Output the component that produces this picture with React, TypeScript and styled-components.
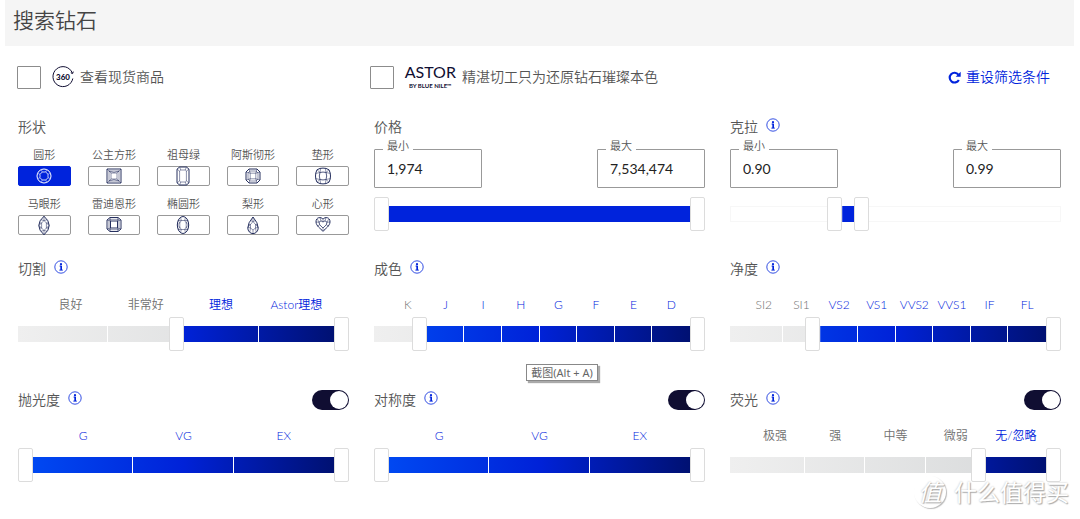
import React, { useId, useState } from "react";
import styled, { createGlobalStyle, css } from "styled-components";

const GlobalStyle = createGlobalStyle`
  *, *::before, *::after { box-sizing: border-box; }
  body {
    margin: 0;
    background: #fff;
    color: #555;
    font-family: Lato, "Noto Sans CJK SC", sans-serif;
    font-size: 14px;
    font-weight: 350;
    line-height: 20px;
  }
  button, input { font: inherit; color: inherit; margin: 0; padding: 0; }
`;

const blue = "#0023dc";
const navy = "#100e32";
const thumb = 15;

const Page = styled.div`
  position: relative;
  padding-bottom: 20px;
`;

const Header = styled.header`
  margin: 0 6px 0 5px;
  padding: 4px 8px 10px;
  background: #f5f5f5;
`;

const Heading = styled.h1`
  margin: 0;
  color: #444;
  font-size: 21px;
  font-weight: 350;
  line-height: 32px;
`;

const Options = styled.div`
  display: grid;
  grid-template-columns: repeat(3, 1fr);
  gap: 25px;
  align-items: center;
  margin: 18px 30px 27px 17px;
  height: 26px;
`;

const Option = styled.label`
  display: flex;
  align-items: center;
  white-space: nowrap;
`;

const Tick = styled.input`
  appearance: none;
  flex: none;
  width: 24px;
  height: 23px;
  margin-right: 11px;
  border: 1px solid #8c8c8c;
  border-radius: 1px;
  background: #fff;
  &:checked { background: ${blue}; }
`;

const Spin = styled.svg`
  width: 22px;
  height: 22px;
  margin-right: 6px;
`;

const Astor = styled.span`
  display: flex;
  flex-direction: column;
  align-items: center;
  gap: 3px;
  margin-right: 6px;
  color: ${navy};
  font-size: 16px;
  font-weight: 400;
  line-height: 15px;
`;

const AstorNote = styled.small`
  font-size: 6px;
  font-weight: 700;
  line-height: 8px;
`;

const Reset = styled.button`
  display: flex;
  align-items: center;
  justify-self: end;
  gap: 5px;
  border: 0;
  background: none;
  color: ${blue};
  white-space: nowrap;
`;

const Filters = styled.main`
  display: grid;
  grid-template-columns: repeat(3, 1fr);
  gap: 24px 25px;
  margin: 0 19px 0 18px;
`;

const Panel = styled.section`
  position: relative;
  min-width: 0;
`;

const GradePanel = styled(Panel)`
  padding-bottom: 15px;
`;

const TitleBar = styled.div`
  display: flex;
  align-items: center;
  height: 20px;
`;

const Title = styled.h2`
  margin: 0;
  font-size: 14px;
  font-weight: 350;
`;

const InfoButton = styled.button`
  display: flex;
  margin: 0 auto 4px 8px;
  border: 0;
  background: none;
  color: ${blue};
`;

const Switch = styled.input`
  appearance: none;
  width: 37px;
  height: 20px;
  margin-left: auto;
  padding: 1px;
  border-radius: 10px;
  background: #aaa;
  &::before {
    content: "";
    display: block;
    width: 18px;
    height: 18px;
    border-radius: 50%;
    background: #fff;
  }
  &:checked { background: ${navy}; }
  &:checked::before { margin-left: auto; }
`;

const ShapeGrid = styled.div`
  display: grid;
  grid-template-columns: repeat(5, 1fr);
  gap: 10px 17px;
  margin-top: 10px;
`;

const ShapeName = styled.span`
  font-size: 11px;
  line-height: 16px;
  white-space: nowrap;
`;

const ShapeFrame = styled.span<{ $on: boolean }>`
  display: flex;
  align-items: center;
  justify-content: center;
  align-self: stretch;
  height: 20px;
  border: 1px solid ${(p) => (p.$on ? blue : "#999")};
  border-radius: 2px;
  background: ${(p) => (p.$on ? blue : "#fff")};
  color: ${(p) => (p.$on ? "#fff" : "#26305f")};
`;

const ShapeButton = styled.button`
  display: flex;
  flex-direction: column;
  align-items: center;
  gap: 3px;
  border: 0;
  background: none;
`;

const Gem = styled.svg`
  flex: none;
  width: 20px;
  height: 20px;
  fill: none;
  stroke: currentColor;
  stroke-width: 1;
`;

const Facets = styled.path`
  stroke-width: 0.7;
  opacity: 0.75;
`;

const Fields = styled.div`
  display: flex;
  justify-content: space-between;
  margin: 12px 0 9px;
`;

const Field = styled.label`
  position: relative;
  width: 108px;
`;

const FieldName = styled.span`
  position: absolute;
  top: -13px;
  left: 9px;
  padding: 0 4px;
  background: #fff;
  font-size: 11px;
`;

const FieldInput = styled.input`
  display: block;
  width: 100%;
  height: 39px;
  padding: 0 12px;
  border: 1px solid #999;
  border-radius: 1px;
  background: #fff;
  color: #222;
  font-weight: 400;
`;

const Grades = styled.div`
  display: grid;
  grid-auto-flow: column;
  grid-auto-columns: 1fr;
  margin: 18px ${thumb}px 4px;
`;

const Grade = styled.span<{ $on: boolean }>`
  display: flex;
  justify-content: center;
  color: ${(p) => (p.$on ? blue : "#707070")};
  font-size: 12px;
  line-height: 16px;
  white-space: nowrap;
`;

const Slider = styled.div`
  display: grid;
  align-items: center;
  height: 34px;
  & > * { grid-area: 1 / 1; }
`;

const Rail = styled.div<{ $plain: boolean }>`
  height: 16px;
  ${(p) =>
    p.$plain
      ? css`border: 1px solid #f7f7f7;`
      : css`background: linear-gradient(90deg, #efefef, #d6d8d9);`}
`;

const Fill = styled.div<{ $plain: boolean }>`
  height: 16px;
  clip-path: inset(
    0 calc((100% - ${thumb * 2}px) * (1 - var(--high)) + ${thumb}px) 0
    calc((100% - ${thumb * 2}px) * var(--low) + ${thumb}px)
  );
  background: ${(p) => (p.$plain ? blue : "linear-gradient(90deg, #004cf4, #0022d8 50%, #000f68)")};
`;

const Marks = styled.div`
  display: grid;
  grid-auto-flow: column;
  grid-auto-columns: 1fr;
  z-index: 1;
  height: 16px;
  margin: 0 ${thumb}px;
`;

const Mark = styled.i`
  border-right: 1px solid #fff;
  &:last-child { border: 0; }
`;

const knob = css`
  appearance: none;
  width: ${thumb}px;
  height: 34px;
  border: 1px solid #dcdcdc;
  border-radius: 2px;
  background: #fff;
  pointer-events: auto;
`;

const Range = styled.input<{ $end: "low" | "high" }>`
  appearance: none;
  z-index: 2;
  min-width: 0;
  height: 34px;
  margin: ${(p) => (p.$end === "low" ? `0 ${thumb}px 0 0` : `0 0 0 ${thumb}px`)};
  background: transparent;
  pointer-events: none;
  &::-webkit-slider-thumb { ${knob} }
  &::-moz-range-thumb { ${knob} }
`;

const Hint = styled.div`
  position: absolute;
  top: 105px;
  left: 46%;
  padding: 0 4px;
  border: 1px solid #888;
  background: #fff;
  box-shadow: 2px 2px 1px #aaa;
  color: #666;
  font-family: "Noto Sans", "Noto Sans CJK SC", sans-serif;
  font-size: 11px;
  font-weight: 400;
  line-height: 15px;
  white-space: nowrap;
`;

const Watermark = styled.div`
  position: absolute;
  right: 11px;
  bottom: 9px;
  display: flex;
  align-items: center;
  gap: 8px;
  color: #fff;
  font-size: 23px;
  font-weight: 400;
  line-height: 32px;
  text-shadow: 1px 1px 1px #aaa, 0 0 2px #bbb;
  pointer-events: none;
`;

const Seal = styled.span`
  display: flex;
  justify-content: center;
  width: 32px;
  height: 32px;
  border-radius: 50%;
  background: #fff;
  box-shadow: 1px 1px 1px #bbb;
  font-style: italic;
`;

const InfoIcon = () => (
  <svg width="14" height="14" viewBox="0 0 14 14" fill="none" stroke="currentColor" aria-hidden="true">
    <circle cx="7" cy="7" r="6.2" strokeWidth="0.8" />
    <circle cx="7" cy="4.2" r="1.1" fill="currentColor" stroke="none" />
    <path d="M5.6 6.1H7.3V10M5.4 10.1H8.8" strokeWidth="1" />
    <path d="M7.2 5.8V10" strokeWidth="1.6" />
  </svg>
);

const gems: Record<string, React.ReactNode> = {
  round: (
    <>
      <circle cx="10" cy="10" r="7" />
      <path d="M8.3 6H11.7L14 8.3V11.7L11.7 14H8.3L6 11.7V8.3Z" strokeWidth="0.8" />
      <Facets d="M8.3 6L7.2 3.6M11.7 6L12.8 3.6M14 8.3L16.4 7.2M14 11.7L16.4 12.8M11.7 14L12.8 16.4M8.3 14L7.2 16.4M6 11.7L3.6 12.8M6 8.3L3.6 7.2" />
    </>
  ),
  princess: (
    <>
      <path d="M3 3H17V17H3Z" />
      <Facets d="M5 5H15V15H5ZM7 7H13V13H7ZM3 3L7 7M17 3L13 7M17 17L13 13M3 17L7 13M5 5L10 6.5L15 5M5 15L10 13.5L15 15" />
    </>
  ),
  emerald: (
    <>
      <path d="M6.5 1H13.5L16 3.2V16.8L13.5 19H6.5L4 16.8V3.2Z" />
      <Facets d="M7.8 4H12.2L13.4 5V15L12.2 16H7.8L6.6 15V5ZM6.5 1L7.8 4M13.5 1L12.2 4M16 3.2L13.4 5M16 16.8L13.4 15M13.5 19L12.2 16M6.5 19L7.8 16M4 16.8L6.6 15M4 3.2L6.6 5" />
    </>
  ),
  asscher: (
    <>
      <path d="M6 3H14L17 6V14L14 17H6L3 14V6Z" />
      <Facets d="M7 5H13L15 7V13L13 15H7L5 13V7ZM7.2 7.2H12.8V12.8H7.2ZM6 3L7.2 7.2M14 3L12.8 7.2M17 6L12.8 7.2M17 14L12.8 12.8M14 17L12.8 12.8M6 17L7.2 12.8M3 14L7.2 12.8M3 6L7.2 7.2" />
    </>
  ),
  cushion: (
    <>
      <path d="M7 2.4Q10 1.8 13 2.4Q17 3 17.2 7Q17.8 10 17.2 13Q17 17 13 17.6Q10 18.2 7 17.6Q3 17 2.8 13Q2.2 10 2.8 7Q3 3 7 2.4Z" />
      <path d="M7 6.5Q10 5.6 13 6.5Q14.4 10 13 13.5Q10 14.4 7 13.5Q5.6 10 7 6.5Z" strokeWidth="0.8" />
      <Facets d="M7 6.5L4.2 4M7 6.5L7.6 2.4M13 6.5L12.4 2.4M13 6.5L15.8 4M13 6.5L17.2 7.4M13 13.5L17.2 12.6M13 13.5L15.8 16M13 13.5L12.4 17.6M7 13.5L7.6 17.6M7 13.5L4.2 16M7 13.5L2.8 12.6M7 6.5L2.8 7.4" />
    </>
  ),
  marquise: (
    <>
      <path d="M10 1.2Q15.2 5.7 15.2 10.5T10 19.8Q4.8 15.3 4.8 10.5T10 1.2Z" />
      <Facets d="M10 5.5L12.4 8V13L10 15.5L7.6 13V8ZM10 1.2V5.5M10 15.5V19.8M13.2 4.8L10 5.5L6.8 4.8M12.4 8L14.8 8M12.4 8L15.2 10.5L12.4 13L14.8 13M7.6 8L5.2 8M7.6 8L4.8 10.5L7.6 13L5.2 13M13.2 16.2L10 15.5L6.8 16.2" />
    </>
  ),
  radiant: (
    <>
      <path d="M6 2.5H14L17 5V14L14 16.5H6L3 14V5Z" />
      <path d="M6.5 6H13.5V13H6.5Z" />
      <Facets d="M5 4.3H15V14.7H5ZM6 2.5L6.5 6M14 2.5L13.5 6M17 5L13.5 6M17 14L13.5 13M14 16.5L13.5 13M6 16.5L6.5 13M3 14L6.5 13M3 5L6.5 6" />
    </>
  ),
  oval: (
    <>
      <ellipse cx="10" cy="10" rx="5.7" ry="8.5" />
      <Facets d="M8.3 5.5H11.7L13.2 8V12L11.7 14.5H8.3L6.8 12V8ZM8.3 5.5L7.5 2.4M11.7 5.5L12.5 2.4M11.7 5.5H14.8L13.2 8L15.7 10L13.2 12L14.8 14.5H11.7L12.5 17.6M8.3 14.5L7.5 17.6M8.3 14.5H5.2L6.8 12L4.3 10L6.8 8L5.2 5.5H8.3" />
    </>
  ),
  pear: (
    <>
      <path d="M10 2Q15.2 8 15.2 12.9A5.2 5.7 0 0 1 4.8 12.9Q4.8 8 10 2Z" />
      <Facets d="M10 6.5L12.5 9.5V13L10 15L7.5 13V9.5ZM10 2V6.5M12.5 5.5L10 6.5L7.5 5.5M14.5 9.5H12.5L15.2 12.3L12.5 13L13.2 17M5.5 9.5H7.5L4.8 12.3L7.5 13L6.8 17M10 15V18.5" />
    </>
  ),
  heart: (
    <>
      <path d="M10 4.2C12 1.5 17.2 2 17 7C16.8 11 12.5 13.5 10 16.3C7.5 13.5 3.2 11 3 7C2.8 2 8 1.5 10 4.2Z" />
      <path d="M10 7L12 5.8L14 7.2L13.3 9.8L10 13L6.7 9.8L6 7.2L8 5.8Z" strokeWidth="0.8" />
      <Facets d="M10 4.2V7M12 5.8L13 2.8M14 7.2L17 7M14 7.2L15.7 4M13.3 9.8L15.5 11M10 13V16.3M6.7 9.8L4.5 11M6 7.2L3 7M6 7.2L4.3 4M8 5.8L7 2.8" />
    </>
  ),
};

const shapes = [
  ["round", "圆形"],
  ["princess", "公主方形"],
  ["emerald", "祖母绿"],
  ["asscher", "阿斯彻形"],
  ["cushion", "垫形"],
  ["marquise", "马眼形"],
  ["radiant", "雷迪恩形"],
  ["oval", "椭圆形"],
  ["pear", "梨形"],
  ["heart", "心形"],
];

function ShapePicker() {
  const [shape, setShape] = useState("round");
  return (
    <Panel>
      <TitleBar>
        <Title>形状</Title>
      </TitleBar>
      <ShapeGrid>
        {shapes.map(([id, name]) => (
          <ShapeButton key={id} type="button" aria-pressed={shape === id} onClick={() => setShape(id)}>
            <ShapeName>{name}</ShapeName>
            <ShapeFrame $on={shape === id}>
              <Gem viewBox="0 0 20 20" aria-hidden="true">{gems[id]}</Gem>
            </ShapeFrame>
          </ShapeButton>
        ))}
      </ShapeGrid>
    </Panel>
  );
}

interface DualRangeProps {
  name: string;
  steps: number;
  low: number;
  high: number;
  onChange: (low: number, high: number) => void;
  plain?: boolean;
}

function DualRange({ name, steps, low, high, onChange, plain = false }: DualRangeProps) {
  const span = { "--low": low / steps, "--high": high / steps } as React.CSSProperties;
  return (
    <Slider>
      <Rail $plain={plain} />
      <Fill $plain={plain} style={span} />
      {!plain && (
        <Marks>
          {Array.from({ length: steps }, (_, i) => (
            <Mark key={i} />
          ))}
        </Marks>
      )}
      <Range
        type="range"
        $end="low"
        aria-label={`${name} 最小`}
        min={0}
        max={steps}
        value={low}
        onChange={(e) => onChange(Math.min(Number(e.target.value), high), high)}
      />
      <Range
        type="range"
        $end="high"
        aria-label={`${name} 最大`}
        min={0}
        max={steps}
        value={high}
        onChange={(e) => onChange(low, Math.max(Number(e.target.value), low))}
      />
    </Slider>
  );
}

interface TitleRowProps {
  id?: string;
  name: string;
  info?: boolean;
  toggle?: boolean;
}

function TitleRow({ id, name, info, toggle }: TitleRowProps) {
  return (
    <TitleBar>
      <Title id={id}>{name}</Title>
      {info && (
        <InfoButton type="button" aria-label={name}>
          <InfoIcon />
        </InfoButton>
      )}
      {toggle && <Switch type="checkbox" role="switch" aria-labelledby={id} defaultChecked />}
    </TitleBar>
  );
}

interface AmountProps {
  name: string;
  from: string;
  to: string;
  low: number;
  high: number;
  info?: boolean;
}

function AmountFilter({ name, from, to, low, high, info }: AmountProps) {
  const [range, setRange] = useState([low, high]);
  return (
    <Panel>
      <TitleRow name={name} info={info} />
      <Fields>
        <Field>
          <FieldName>最小</FieldName>
          <FieldInput type="text" defaultValue={from} />
        </Field>
        <Field>
          <FieldName>最大</FieldName>
          <FieldInput type="text" defaultValue={to} />
        </Field>
      </Fields>
      <DualRange name={name} steps={1000} low={range[0]} high={range[1]} onChange={(a, b) => setRange([a, b])} plain />
    </Panel>
  );
}

interface GradeProps {
  name: string;
  grades: string[];
  from?: number;
  toggle?: boolean;
  children?: React.ReactNode;
}

function GradeFilter({ name, grades, from = 0, toggle, children }: GradeProps) {
  const id = useId();
  const [range, setRange] = useState([from, grades.length]);
  return (
    <GradePanel>
      <TitleRow id={id} name={name} info toggle={toggle} />
      <Grades>
        {grades.map((grade, i) => (
          <Grade key={grade} $on={i >= range[0] && i < range[1]}>
            {grade}
          </Grade>
        ))}
      </Grades>
      <DualRange name={name} steps={grades.length} low={range[0]} high={range[1]} onChange={(a, b) => setRange([a, b])} />
      {children}
    </GradePanel>
  );
}

export default function App() {
  return (
    <Page>
      <GlobalStyle />
      <Header>
        <Heading>搜索钻石</Heading>
      </Header>
      <Options>
        <Option>
          <Tick type="checkbox" />
          <Spin viewBox="0 0 22 22" fill="none" stroke={navy} aria-hidden="true">
            <path d="M20.3 7A10 10 0 1 0 20.8 12.5" />
            <path d="M18.8 6.8L20.6 7.6L21.3 5.6" />
            <text x="11" y="14" fill={navy} stroke="none" fontSize="8" fontWeight="900" textAnchor="middle">360</text>
          </Spin>
          查看现货商品
        </Option>
        <Option>
          <Tick type="checkbox" />
          <Astor>
            ASTOR
            <AstorNote>BY BLUE NILE™</AstorNote>
          </Astor>
          精湛切工只为还原钻石璀璨本色
        </Option>
        <Reset type="button">
          <svg width="13" height="13" viewBox="0 0 12 12" fill="none" stroke="currentColor" aria-hidden="true">
            <path d="M9.6 3.3A4.5 4.5 0 1 0 10 8.3" strokeWidth="2" />
            <path d="M11.7 .6V5.2H7.1Z" fill="currentColor" stroke="none" />
          </svg>
          重设筛选条件
        </Reset>
      </Options>
      <Filters>
        <ShapePicker />
        <AmountFilter name="价格" from="1,974" to="7,534,474" low={0} high={1000} />
        <AmountFilter name="克拉" from="0.90" to="0.99" low={323} high={363} info />
        <GradeFilter name="切割" grades={["良好", "非常好", "理想", "Astor理想"]} from={2} />
        <GradeFilter name="成色" grades={["K", "J", "I", "H", "G", "F", "E", "D"]} from={1}>
          <Hint role="tooltip">截图(Alt + A)</Hint>
        </GradeFilter>
        <GradeFilter name="净度" grades={["SI2", "SI1", "VS2", "VS1", "VVS2", "VVS1", "IF", "FL"]} from={2} />
        <GradeFilter name="抛光度" grades={["G", "VG", "EX"]} toggle />
        <GradeFilter name="对称度" grades={["G", "VG", "EX"]} toggle />
        <GradeFilter name="荧光" grades={["极强", "强", "中等", "微弱", "无/忽略"]} from={4} toggle />
      </Filters>
      <Watermark>
        <Seal>值</Seal>
        什么值得买
      </Watermark>
    </Page>
  );
}
